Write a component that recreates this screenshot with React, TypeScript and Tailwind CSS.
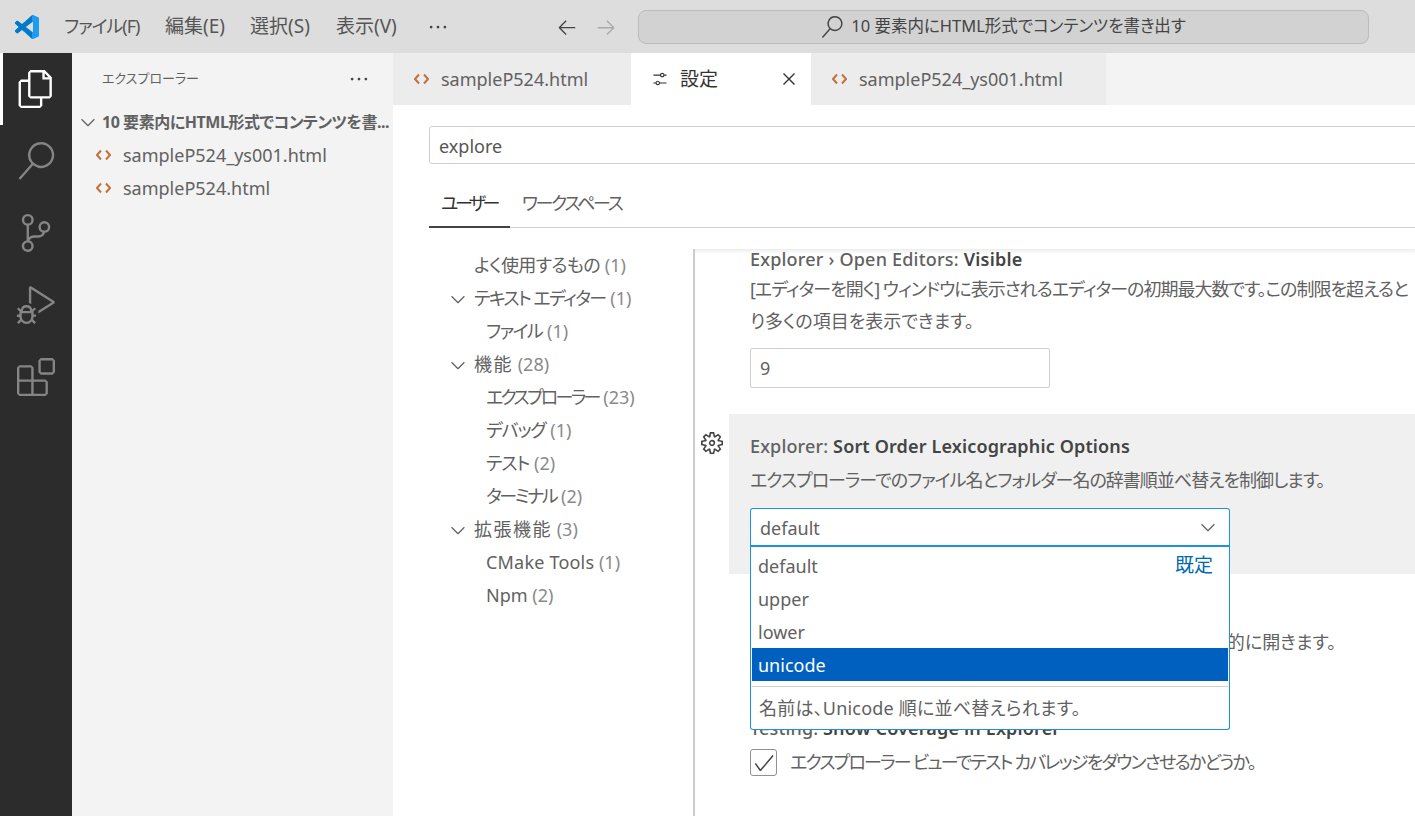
import React from 'react';
import {
  VscFiles, VscSearch, VscSourceControl, VscDebugAlt, VscExtensions, VscEllipsis, VscChevronDown,
  VscArrowLeft, VscArrowRight, VscClose, VscSettings, VscSettingsGear, VscCheck,
} from 'react-icons/vsc';

const VsLogo = () => (
  <svg width="24" height="24" viewBox="0 0 24 24">
    <defs>
      <clipPath id="logo-left"><rect x="0" y="0" width="8.5" height="24" /></clipPath>
      <clipPath id="logo-right"><rect x="17" y="0" width="7" height="24" /></clipPath>
    </defs>
    <path id="logo-shape" fill="#007acc" d="M23.15 2.587L18.21.21a1.494 1.494 0 0 0-1.705.29l-9.46 8.63-4.12-3.128a.999.999 0 0 0-1.276.057L.327 7.261A1 1 0 0 0 .326 8.74L3.899 12 .326 15.26a1 1 0 0 0 .001 1.479L1.65 17.94a.999.999 0 0 0 1.276.057l4.12-3.128 9.46 8.63a1.492 1.492 0 0 0 1.704.29l4.942-2.377A1.5 1.5 0 0 0 24 20.06V3.939a1.5 1.5 0 0 0-.85-1.352zm-5.146 14.861L10.826 12l7.178-5.448v10.896z" />
    <use href="#logo-shape" fill="#0065a9" clipPath="url(#logo-left)" />
    <path clipPath="url(#logo-right)" fill="#1f9cf0" d="M23.15 2.587L18.21.21a1.494 1.494 0 0 0-1.705.29L7 9.1v5.8l9.5 8.6a1.492 1.492 0 0 0 1.704.29l4.942-2.377A1.5 1.5 0 0 0 24 20.06V3.939a1.5 1.5 0 0 0-.85-1.352zm-5.146 14.861L10.826 12l7.178-5.448v10.896z" />
  </svg>
);

const HtmlIcon = () => (
  <svg width="15" height="12" viewBox="0 0 15 12" fill="none" stroke="#c4713f" strokeWidth="2" className="shrink-0">
    <path d="M5 1.5 1 6l4 4.5M10 1.5 14 6l-4 4.5" />
  </svg>
);

const Count = ({ n }: { n: number }) => <span className="text-[#8a8a8a]"> ({n})</span>;

const tocItems = [
  { label: 'よく使用するもの', n: 1, indent: 'pl-[45px]', fit: 'tracking-[-0.6px]' },
  { label: 'テキスト エディター', n: 1, indent: 'pl-[45px]', fit: 'tracking-[-1.6px]', open: true },
  { label: 'ファイル', n: 1, indent: 'pl-[57px]', fit: 'tracking-[-1.5px]' },
  { label: '機能', n: 28, indent: 'pl-[45px]', fit: 'tracking-[1.5px]', open: true },
  { label: 'エクスプローラー', n: 23, indent: 'pl-[57px]', fit: 'tracking-[-2.7px]' },
  { label: 'デバッグ', n: 1, indent: 'pl-[57px]', fit: 'tracking-[-1.2px]' },
  { label: 'テスト', n: 2, indent: 'pl-[57px]', fit: 'tracking-[-1px]' },
  { label: 'ターミナル', n: 2, indent: 'pl-[57px]', fit: 'tracking-[-2.4px]' },
  { label: '拡張機能', n: 3, indent: 'pl-[45px]', fit: 'tracking-[1.5px]', open: true },
  { label: 'CMake Tools', n: 1, indent: 'pl-[57px]', fit: 'tracking-[0.2px]' },
  { label: 'Npm', n: 2, indent: 'pl-[57px]', fit: '' },
];

const App = () => {
  return (
    <div className="h-[816px] w-[1415px] flex flex-col overflow-hidden bg-white text-[#616161] text-[18px] font-['Noto_Sans','Noto_Sans_CJK_JP',sans-serif] [font-feature-settings:'palt']">
      {/* title bar */}
      <div className="h-[53px] shrink-0 bg-[#dddddd] flex items-center text-[#555]">
        <div className="w-[64px] pl-[15px] shrink-0"><VsLogo /></div>
        <div className="w-[101px] shrink-0 tracking-[-1px]">ファイル(F)</div>
        <div className="w-[85px] shrink-0 text-[19px]">編集(E)</div>
        <div className="w-[86px] shrink-0 text-[19px]">選択(S)</div>
        <div className="w-[91px] shrink-0 text-[19px]">表示(V)</div>
        <VscEllipsis size={22} className="text-[#444] shrink-0" />
        <div className="w-[189px] shrink-0 flex justify-end gap-[17px] pr-[21px]">
          <VscArrowLeft size={22} className="text-[#444]" />
          <VscArrowRight size={22} className="text-[#aaa]" />
        </div>
        <div className="w-[731px] h-[34px] shrink-0 rounded-lg border border-[#bcbcbc] bg-[#d2d2d2] flex items-center justify-center gap-[8px] text-[16.5px] text-[#444]">
          <VscSearch size={22} />
          <span>10 要素内にHTML形式でコンテンツを書き出す</span>
        </div>
      </div>

      <div className="flex flex-1 min-h-0">
        {/* activity bar */}
        <div className="w-[72px] shrink-0 bg-[#2c2c2c] flex flex-col text-[#858585]">
          <div className="h-[72px] flex items-center justify-center border-l-[3px] pr-[3px] border-white text-white bg-[#2c2c2c]">
            <VscFiles size={38} />
          </div>
          <div className="h-[72px] flex items-center justify-center"><VscSearch size={38} /></div>
          <div className="h-[72px] flex items-center justify-center"><VscSourceControl size={38} /></div>
          <div className="h-[72px] flex items-center justify-center"><VscDebugAlt size={38} /></div>
          <div className="h-[72px] flex items-center justify-center"><VscExtensions size={38} /></div>
        </div>

        {/* sidebar */}
        <div className="w-[321px] shrink-0 bg-[#f3f3f3]">
          <div className="h-[52px] flex items-center justify-between pl-[30px] pr-[23px] text-[13px] text-[#616161]">
            <span>エクスプローラー</span>
            <VscEllipsis size={22} className="text-[#444]" />
          </div>
          <div className="h-[33px] flex items-center pl-[5px] gap-[3px] text-[#616161]">
            <VscChevronDown size={22} className="shrink-0" />
            <span className="font-bold text-[16px] tracking-[-0.45px] whitespace-nowrap">10 要素内にHTML形式でコンテンツを書...</span>
          </div>
          <div className="h-[33px] flex items-center pl-[24px] gap-[12px]"><HtmlIcon /><span className="pt-[1px]">sampleP524_ys001.html</span></div>
          <div className="h-[33px] flex items-center pl-[24px] gap-[12px]"><HtmlIcon /><span className="pt-[1px]">sampleP524.html</span></div>
        </div>

        {/* editor */}
        <div className="flex-1 min-w-0 flex flex-col">
          <div className="h-[52px] shrink-0 flex bg-[#f3f3f3]">
            <div className="w-[238px] bg-[#ececec] flex items-center pl-[21px] gap-[12px]"><HtmlIcon /><span className="pt-[1px]">sampleP524.html</span></div>
            <div className="w-[180px] bg-white flex items-center pl-[20px] text-[#333]">
              <VscSettings size={18} className="mr-[11px]" />
              <span className="text-[19px]">設定</span>
              <VscClose size={22} className="ml-auto mr-[11px]" />
            </div>
            <div className="w-[295px] bg-[#ececec] flex items-center pl-[21px] gap-[12px]"><HtmlIcon /><span className="pt-[1px]">sampleP524_ys001.html</span></div>
          </div>

          <div className="flex-1 min-h-0 pl-[36px] flex flex-col">
            <div className="mt-[21px] h-[38px] w-[1100px] shrink-0 rounded-[3px] border border-[#cecece] flex items-center pl-[9px] text-[#555]"><span className="pt-[2px]">explore</span></div>
            <div className="mt-[21px] h-[43px] w-[1100px] shrink-0 flex border-b border-[#cecece] whitespace-nowrap">
              <div className="w-[81px] h-[43px] border-b-2 border-[#444] pl-[12px] pt-[5px] text-[#333] tracking-[-3.5px]">ユーザー</div>
              <div className="pl-[12px] pt-[5px] tracking-[-2.3px]">ワークスペース</div>
            </div>

            <div className="mt-[21px] flex-1 min-h-0 flex">
              {/* toc */}
              <div className="w-[264px] shrink-0">
                {tocItems.map(item => (
                  <div key={item.label} className={`relative h-[33px] flex items-center whitespace-nowrap ${item.indent}`}>
                    {item.open && <VscChevronDown size={22} className="absolute left-[18px] top-[6px]" />}
                    <span><span className={item.fit}>{item.label}</span><Count n={item.n} /></span>
                  </div>
                ))}
              </div>

              {/* settings list */}
              <div className="flex-1 min-w-0 border-l-2 border-[#cccccc] pl-[34px] shadow-[inset_0_6px_6px_-6px_#d8d8d8]">
                <div className="pl-[21px] w-[1000px]">
                  <div className="h-[20px] leading-[20px] font-medium tracking-[0.2px] text-[#616161] whitespace-nowrap">Explorer › Open Editors: <span className="font-semibold text-[#444]">Visible</span></div>
                  <div className="mt-[4px] leading-[32px] whitespace-nowrap">
                    <div className="tracking-[-1px]">[エディターを開く] ウィンドウに表示されるエディターの初期最大数です。この制限を超えると</div>
                    <div>り多くの項目を表示できます。</div>
                  </div>
                  <div className="mt-[11px] h-[40px] w-[300px] border border-[#cecece] rounded-[2px] flex items-center pl-[9px]">9</div>
                </div>

                <div className="relative mt-[26px] w-[1000px] bg-[#f0f0f0] pt-[22px] pb-[27px] pl-[21px]">
                  <VscSettingsGear size={22} className="absolute left-[-28px] top-[18px] text-[#444]" />
                  <div className="h-[20px] leading-[20px] font-medium tracking-[0.15px] whitespace-nowrap">Explorer: <span className="font-semibold text-[#444]">Sort Order Lexicographic Options</span></div>
                  <div className="mt-[8px] h-[32px] leading-[32px] tracking-[-1px] whitespace-nowrap">エクスプローラーでのファイル名とフォルダー名の辞書順並べ替えを制御します。</div>
                  <div className="relative mt-[12px] w-[480px]">
                    <div className="h-[39px] rounded-t-[3px] border border-[#1b93dc] border-b-2 bg-white flex items-center pl-[9px] pr-[10px] justify-between">
                      <span className="pt-[2px]">default</span>
                      <VscChevronDown size={22} />
                    </div>
                    {/* dropdown */}
                    <div className="absolute z-10 left-0 top-full h-[183px] w-full bg-white border border-t-0 border-[#1b93dc] rounded-b-[3px] px-[1px] pt-[2px]">
                      <div className="h-[33px] flex items-center justify-between pl-[6px] pr-[15px]"><span className="pt-[2px]">default</span><span className="text-[19px] text-[#006ab1]">既定</span></div>
                      <div className="h-[33px] flex items-center pl-[6px] pt-[2px]">upper</div>
                      <div className="h-[33px] flex items-center pl-[6px] pt-[2px]">lower</div>
                      <div className="h-[33px] flex items-center pl-[6px] pt-[2px] bg-[#0060c0] text-white">unicode</div>
                      <div className="mt-[5px] h-[43px] border-t border-[#d0d0d0] flex items-center pl-[7px] tracking-[0.2px]">名前は、Unicode 順に並べ替えられます。</div>
                    </div>
                  </div>
                </div>

                <div className="pl-[21px] w-[1000px]">
                  {/* only the end of this line shows past the open dropdown */}
                  <div className="mt-[52px] h-[32px] leading-[32px] w-[586px] text-right whitespace-nowrap">的に開きます。</div>
                  <div className="mt-[60px] h-[20px] leading-[20px] font-medium tracking-[0.15px] text-[#616161]">Testing: <span className="font-semibold text-[#444]">Show Coverage in Explorer</span></div>
                  <div className="mt-[11px] flex items-center gap-[13px] whitespace-nowrap">
                    <div className="w-[27px] h-[27px] border border-[#919191] rounded-[3px] flex items-center justify-center text-[#444]"><VscCheck size={24} /></div>
                    <span className="tracking-[-1.8px]">エクスプローラー ビューでテスト カバレッジをダウンさせるかどうか。</span>
                  </div>
                </div>
              </div>
            </div>
          </div>
        </div>
      </div>
    </div>
  );
};

export default App;
